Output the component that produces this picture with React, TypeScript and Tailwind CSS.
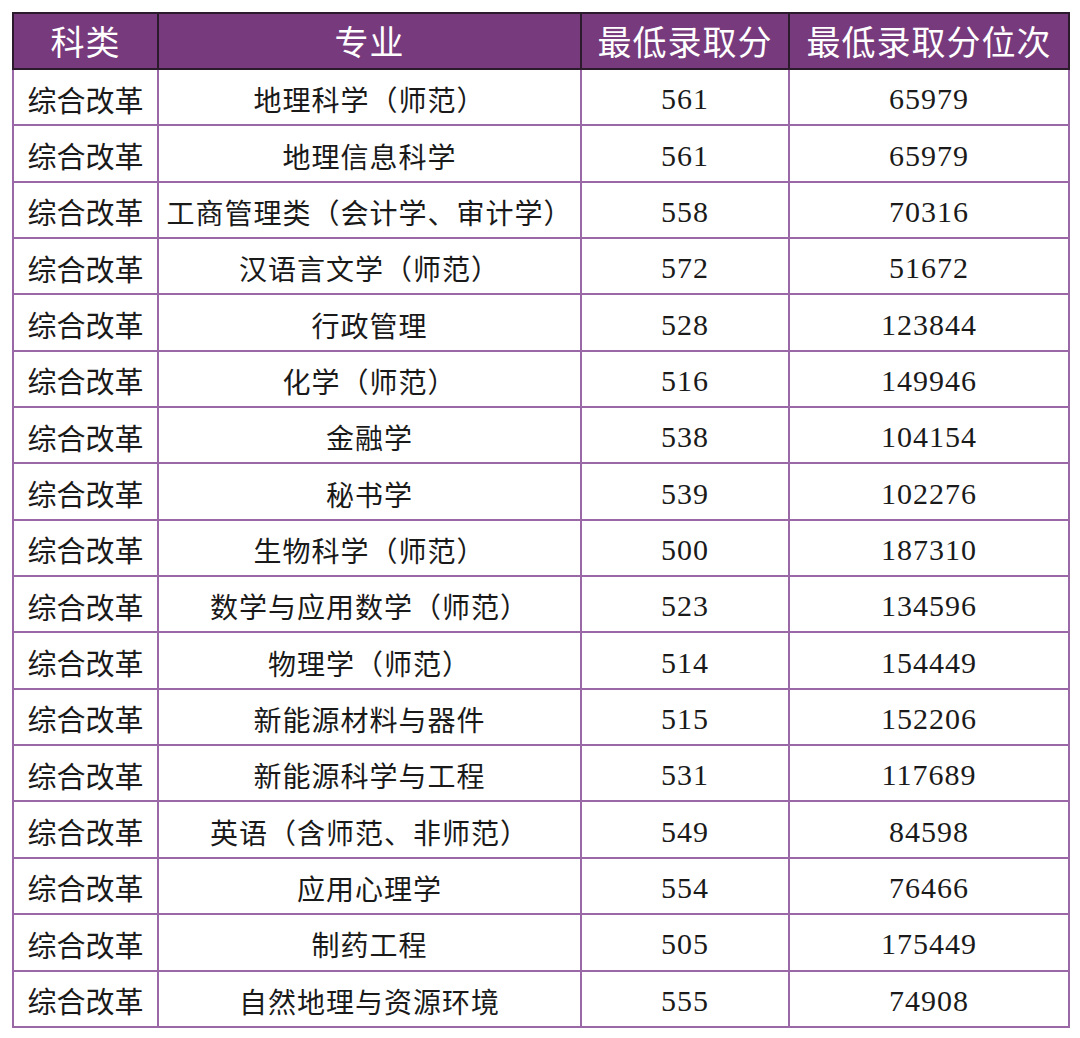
const rows: [string, string, string, string][] = [
  ["综合改革", "地理科学（师范）", "561", "65979"],
  ["综合改革", "地理信息科学", "561", "65979"],
  ["综合改革", "工商管理类（会计学、审计学）", "558", "70316"],
  ["综合改革", "汉语言文学（师范）", "572", "51672"],
  ["综合改革", "行政管理", "528", "123844"],
  ["综合改革", "化学（师范）", "516", "149946"],
  ["综合改革", "金融学", "538", "104154"],
  ["综合改革", "秘书学", "539", "102276"],
  ["综合改革", "生物科学（师范）", "500", "187310"],
  ["综合改革", "数学与应用数学（师范）", "523", "134596"],
  ["综合改革", "物理学（师范）", "514", "154449"],
  ["综合改革", "新能源材料与器件", "515", "152206"],
  ["综合改革", "新能源科学与工程", "531", "117689"],
  ["综合改革", "英语（含师范、非师范）", "549", "84598"],
  ["综合改革", "应用心理学", "554", "76466"],
  ["综合改革", "制药工程", "505", "175449"],
  ["综合改革", "自然地理与资源环境", "555", "74908"],
];

const cjk = "font-['Noto_Sans_CJK_SC',sans-serif]";
const num = "font-['Liberation_Serif','Noto_Sans_CJK_SC',serif] tracking-[1px]";

export default function App() {
  return (
    <div className="min-h-[1038px] w-[1080px] bg-white pl-3 pt-3">
      <table className="w-[1056px] table-fixed border-collapse text-[#1a1a1a]">
        <colgroup>
          <col className="w-[145px]" />
          <col className="w-[423px]" />
          <col className="w-[208px]" />
          <col className="w-[280px]" />
        </colgroup>
        <thead>
          <tr className="h-[56px] bg-[#773a7c] text-white">
            {["科类", "专业", "最低录取分", "最低录取分位次"].map((h) => (
              <th
                key={h}
                className={`border-2 border-[#2b1a2c] p-0 text-center text-[34px] font-normal leading-none tracking-[1px] ${cjk}`}
              >
                {h}
              </th>
            ))}
          </tr>
        </thead>
        <tbody>
          {rows.map((r, i) => (
            <tr key={i} className="h-[56.35px]">
              <td className={`border-2 border-[#9a68a6] p-0 pt-1 text-center text-[29px] leading-none ${cjk}`}>
                {r[0]}
              </td>
              <td className={`border-2 border-[#9a68a6] p-0 pt-1 text-center text-[28px] leading-none tracking-[1px] ${cjk}`}>
                {r[1]}
              </td>
              <td className={`border-2 border-[#9a68a6] p-0 pt-1 text-center text-[30px] leading-none ${num}`}>
                {r[2]}
              </td>
              <td className={`border-2 border-[#9a68a6] p-0 pt-1 text-center text-[30px] leading-none ${num}`}>
                {r[3]}
              </td>
            </tr>
          ))}
        </tbody>
      </table>
    </div>
  );
}
